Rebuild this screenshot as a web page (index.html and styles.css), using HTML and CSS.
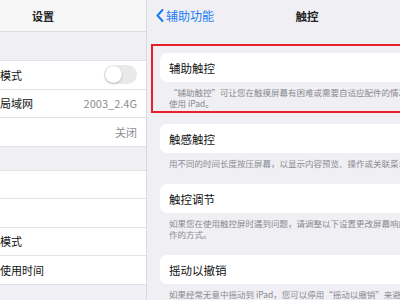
FILE: index.html
```html
<!DOCTYPE html>
<html lang="zh-CN">
<head>
<meta charset="utf-8">
<title>触控</title>
<link rel="stylesheet" href="styles.css">
</head>
<body>
<div class="app">
  <aside class="sidebar">
    <header class="sb-head">设置</header>
    <ul class="group g1">
      <li class="row"><span class="label">飞行模式</span><span class="toggle"><span class="knob"></span></span></li>
      <li class="row"><span class="label">无线局域网</span><span class="value">2003_2.4G</span></li>
      <li class="row"><span class="label">蓝牙</span><span class="value">关闭</span></li>
    </ul>
    <ul class="group g2">
      <li class="row"><span class="label">通知</span></li>
      <li class="row"><span class="label">声音</span></li>
      <li class="row"><span class="label">勿扰模式</span></li>
      <li class="row"><span class="label">屏幕使用时间</span></li>
    </ul>
  </aside>
  <main class="detail">
    <nav class="nav">
      <a class="back"><svg class="chev" width="8" height="13" viewBox="0 0 8 13"><path d="M6.5 1 L1.5 6.5 L6.5 12" fill="none" stroke="#1a7cf5" stroke-width="2" stroke-linecap="round" stroke-linejoin="round"/></svg>辅助功能</a>
      <h1 class="title">触控</h1>
      <span></span>
    </nav>
    <div class="content">
      <section class="block highlighted">
        <div class="card">辅助触控</div>
        <p class="desc">“辅助触控”可让您在触摸屏幕有困难或需要自适应配件的情况下<br>使用 iPad。</p>
        <div class="mark"></div>
      </section>
      <section class="block">
        <div class="card">触感触控</div>
        <p class="desc">用不同的时间长度按压屏幕，以显示内容预览、操作或关联菜单。</p>
      </section>
      <section class="block">
        <div class="card">触控调节</div>
        <p class="desc">如果您在使用触控屏时遇到问题，请调整以下设置更改屏幕响应触控操<br>作的方式。</p>
      </section>
      <section class="block">
        <div class="card">摇动以撤销</div>
        <p class="desc">如果经常无意中摇动到 iPad，您可以停用“摇动以撤销”来避免出现撤销提示。</p>
      </section>
    </div>
  </main>
</div>
</body>
</html>
```

FILE: styles.css
```css
* { box-sizing: border-box; }
html, body {
  margin: 0;
  padding: 0;
  width: 400px;
  height: 300px;
  overflow: hidden;
  background: #efeff4;
  font-family: "Noto Sans CJK SC", "Noto Sans", sans-serif;
  color: #000;
}
.app {
  display: flex;
  width: 400px;
  height: 300px;
  overflow: hidden;
}
.sidebar {
  flex: none;
  width: 207px;
  margin-left: -60px;
  height: 300px;
  background: #efeff4;
  border-right: 1px solid #d9d9de;
}
.sb-head {
  height: 32px;
  display: flex;
  align-items: center;
  justify-content: center;
  background: #f7f7f8;
  border-bottom: 1px solid #dcdce0;
  font-size: 11px;
  font-weight: 600;
  color: #222;
  margin-bottom: 28px;
}
.group {
  list-style: none;
  margin: 0;
  padding: 0;
  background: #fff;
  border-top: 1px solid #e2e2e6;
}
.g2 { margin-top: 23px; }
.row {
  height: 28.5px;
  display: flex;
  align-items: center;
  justify-content: space-between;
  padding: 0 9px 0 38px;
  border-bottom: 1px solid #e2e2e6;
  font-size: 11px;
  color: #111;
}
.value {
  color: #8e8e93;
  font-size: 11px;
}
.toggle {
  width: 33px;
  height: 19px;
  border-radius: 10px;
  background: #e9e9eb;
  padding: 1px;
  display: flex;
  align-items: center;
}
.knob {
  width: 17px;
  height: 17px;
  border-radius: 50%;
  background: #fff;
  box-shadow: 0 1px 2px rgba(0,0,0,0.22), 0 0 0 0.5px rgba(0,0,0,0.05);
}
.detail {
  flex: none;
  width: 320px;
  height: 300px;
  background: #efeff4;
}
.nav {
  height: 31px;
  display: grid;
  grid-template-columns: 1fr auto 1fr;
  align-items: center;
  padding: 0 9px;
}
.back {
  display: flex;
  align-items: center;
  gap: 2px;
  color: #1a7cf5;
  font-size: 12px;
}
.chev { display: block; }
.title {
  margin: 0;
  font-size: 11.5px;
  font-weight: 600;
  color: #222;
}
.content {
  padding: 22px 13px 0;
}
.block {
  position: relative;
  margin-bottom: 15px;
}
.card {
  height: 29px;
  display: flex;
  align-items: center;
  padding-left: 9px;
  background: #fff;
  border-radius: 7px;
  font-size: 11.5px;
  color: #111;
}
.desc {
  margin: 5px 0 0;
  padding-left: 9px;
  font-size: 8.5px;
  line-height: 11px;
  color: #8a8a8f;
  white-space: nowrap;
}
.mark {
  position: absolute;
  left: -9px;
  top: -9px;
  right: -9px;
  bottom: -4px;
  border: 2.5px solid #e8202a;
}
```
